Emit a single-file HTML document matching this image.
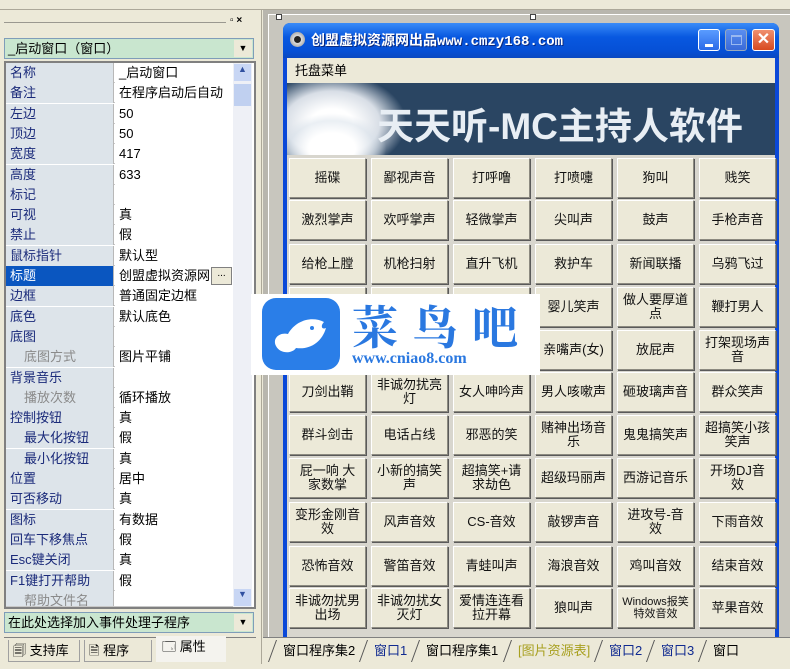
<!DOCTYPE html>
<html><head><meta charset="utf-8"><style>
*{margin:0;padding:0;box-sizing:border-box}
body{width:790px;height:669px;overflow:hidden;background:#ece9d8;position:relative;font-family:"Liberation Sans","Noto Sans CJK SC","WenQuanYi Zen Hei",sans-serif;font-size:13px;color:#000}
.a{position:absolute}
.row{position:absolute;left:6px;width:227px;height:20px;border-bottom:1px solid #c8c8c8}
.row .n{position:absolute;left:0;top:0;width:108px;height:20px;background:#dde4ea;color:#1a2a7a;padding-left:4px;line-height:20px;border-right:1px solid #b8b8b8}
.row .v{position:absolute;left:109px;top:0;width:118px;height:20px;background:#fff;padding-left:4px;line-height:20px;white-space:nowrap;overflow:hidden}
.sub .n{padding-left:18px}
.gray .n{color:#8a8a8a}
.sel .n{background:#0a56c0;color:#fff}
.b{position:absolute;width:77px;height:40px;background:#ece9d8;border:1px solid;border-color:#fff #8c8a80 #8c8a80 #fff;box-shadow:1px 1px 0 #5a5a5a;display:flex;align-items:center;justify-content:center;text-align:center;font-size:13px;line-height:14px;color:#111;padding:0 4px}
.tab{position:absolute;top:640px;height:22px;line-height:22px;font-size:13px}
.bt span{display:inline-block;padding:0 8px 0 10px;border-left:1px solid #555;transform:skewX(-20deg)}
.bt span i{display:inline-block;font-style:normal;transform:skewX(20deg)}
</style></head><body>
<div class="a" style="left:0;top:0;width:790px;height:10px;background:#ece9d8;border-bottom:1px solid #aca899"></div>
<div class="a" style="left:0;top:10px;width:262px;height:659px;background:#ece9d8;border-right:1px solid #aca899"></div>
<div class="a" style="left:4px;top:22px;width:222px;height:1px;background:#9a9890"></div>
<div class="a" style="left:230px;top:15px;font-size:10px;font-weight:bold">▫ ×</div>
<div class="a" style="left:4px;top:38px;width:250px;height:21px;background:#c9e6cf;border:1px solid #7f9db9;line-height:19px;padding-left:3px">_启动窗口（窗口）</div>
<div class="a" style="left:234px;top:40px;width:18px;height:17px;background:#ece9d8;font-size:9px;text-align:center;line-height:17px">▼</div>
<div class="a" style="left:4px;top:61px;width:252px;height:548px;border:2px solid #808080;background:#fff"></div>
<div class="a" style="left:233px;top:63px;width:19px;height:544px;background:#eef0f6"></div>
<div class="a" style="left:234px;top:64px;width:17px;height:17px;background:#c8d6f4;font-size:9px;text-align:center;color:#3050a0">▲</div>
<div class="a" style="left:234px;top:84px;width:17px;height:22px;background:#c0d0f0"></div>
<div class="a" style="left:234px;top:589px;width:17px;height:17px;background:#c8d6f4;font-size:9px;text-align:center;color:#3050a0">▼</div>

<div class="row" style="top:63px"><div class="n">名称</div><div class="v">_启动窗口</div></div>
<div class="row" style="top:83.3px"><div class="n">备注</div><div class="v">在程序启动后自动</div></div>
<div class="row" style="top:103.6px"><div class="n">左边</div><div class="v">50</div></div>
<div class="row" style="top:123.9px"><div class="n">顶边</div><div class="v">50</div></div>
<div class="row" style="top:144.2px"><div class="n">宽度</div><div class="v">417</div></div>
<div class="row" style="top:164.5px"><div class="n">高度</div><div class="v">633</div></div>
<div class="row" style="top:184.8px"><div class="n">标记</div><div class="v"></div></div>
<div class="row" style="top:205.1px"><div class="n">可视</div><div class="v">真</div></div>
<div class="row" style="top:225.4px"><div class="n">禁止</div><div class="v">假</div></div>
<div class="row" style="top:245.7px"><div class="n">鼠标指针</div><div class="v">默认型</div></div>
<div class="row sel" style="top:266px"><div class="n">标题</div><div class="v">创盟虚拟资源网</div></div>
<div class="a" style="left:211px;top:267px;width:21px;height:18px;background:#ece9d8;border:1px solid #808080;font-size:10px;text-align:center;line-height:12px">...</div>
<div class="row" style="top:286.3px"><div class="n">边框</div><div class="v">普通固定边框</div></div>
<div class="row" style="top:306.6px"><div class="n">底色</div><div class="v">默认底色</div></div>
<div class="row" style="top:326.9px"><div class="n">底图</div><div class="v"></div></div>
<div class="row sub gray" style="top:347.2px"><div class="n">底图方式</div><div class="v">图片平铺</div></div>
<div class="row" style="top:367.5px"><div class="n">背景音乐</div><div class="v"></div></div>
<div class="row sub gray" style="top:387.8px"><div class="n">播放次数</div><div class="v">循环播放</div></div>
<div class="row" style="top:408.1px"><div class="n">控制按钮</div><div class="v">真</div></div>
<div class="row sub" style="top:428.4px"><div class="n">最大化按钮</div><div class="v">假</div></div>
<div class="row sub" style="top:448.7px"><div class="n">最小化按钮</div><div class="v">真</div></div>
<div class="row" style="top:469px"><div class="n">位置</div><div class="v">居中</div></div>
<div class="row" style="top:489.3px"><div class="n">可否移动</div><div class="v">真</div></div>
<div class="row" style="top:509.6px"><div class="n">图标</div><div class="v">有数据</div></div>
<div class="row" style="top:529.9px"><div class="n">回车下移焦点</div><div class="v">假</div></div>
<div class="row" style="top:550.2px"><div class="n">Esc键关闭</div><div class="v">真</div></div>
<div class="row" style="top:570.5px"><div class="n">F1键打开帮助</div><div class="v">假</div></div>
<div class="row sub gray" style="top:590.8px;height:16px;overflow:hidden"><div class="n">帮助文件名</div><div class="v"></div></div>

<div class="a" style="left:4px;top:612px;width:250px;height:21px;background:#c9e6cf;border:1px solid #7f9db9;line-height:19px;padding-left:3px">在此处选择加入事件处理子程序</div>
<div class="a" style="left:234px;top:614px;width:18px;height:17px;background:#ece9d8;font-size:9px;text-align:center;line-height:17px">▼</div>
<div class="a" style="left:4px;top:637px;width:252px;height:1px;background:#808080"></div>
<div class="tab" style="left:8px;width:72px;border:1px solid #a0a0a0;border-top:none;padding-left:4px">🗐 支持库</div>
<div class="tab" style="left:84px;width:68px;border:1px solid #a0a0a0;border-top:none;padding-left:4px">🗎 程序</div>
<div class="tab" style="left:156px;width:70px;background:#f4f3ee;padding-left:6px;top:636px;height:26px">🗔 属性</div>

<div class="a" style="left:263px;top:10px;width:527px;height:627px;background:#b8b6ae"></div>
<div class="a" style="left:268px;top:14px;width:522px;height:623px;background:#c8c6be;border-top:1px solid #fff;border-left:1px solid #fff"></div>
<div class="a" style="left:276px;top:14px;width:6px;height:6px;border:1px solid #444;background:#fff"></div>
<div class="a" style="left:530px;top:14px;width:6px;height:6px;border:1px solid #444;background:#fff"></div>
<div class="a" style="left:283px;top:23px;width:496px;height:614px;background:#0a48d8;border-radius:7px 7px 0 0"></div>
<div class="a" style="left:283px;top:23px;width:496px;height:35px;background:linear-gradient(#3a8cf8,#0858e0 40%,#0650d6 80%,#0a48c0);border-radius:7px 7px 0 0"></div>
<div class="a" style="left:290px;top:32px;width:15px;height:15px;border-radius:50%;background:radial-gradient(#222 30%,#ddd 35%,#888)"></div>
<div class="a" style="left:311px;top:30px;color:#fff;font-weight:bold;font-size:14px;font-family:'Liberation Mono','Noto Sans CJK SC',monospace;text-shadow:1px 1px #0a2a80">创盟虚拟资源网出品www.cmzy168.com</div>
<div class="a" style="left:698px;top:29px;width:22px;height:22px;border:1px solid #fff;border-radius:3px;background:linear-gradient(#5a9cff,#2a6ae8)"><div class="a" style="left:6px;top:14px;width:8px;height:3px;background:#fff"></div></div>
<div class="a" style="left:725px;top:29px;width:22px;height:22px;border:1px solid #9ab;border-radius:3px;background:linear-gradient(#5a8ef0,#3a6ad8)"><div class="a" style="left:5px;top:5px;width:11px;height:10px;border:1px solid #9ab8f0;border-top-width:2px"></div></div>
<div class="a" style="left:752px;top:29px;width:23px;height:22px;border:1px solid #fff;border-radius:3px;background:linear-gradient(#f09070,#d84a20);color:#fff;font-weight:bold;text-align:center;line-height:20px;font-size:16px">✕</div>
<div class="a" style="left:287px;top:58px;width:488px;height:25px;background:#ece9d8;line-height:25px;padding-left:8px;font-size:13px">托盘菜单</div>
<div class="a" style="left:287px;top:83px;width:488px;height:72px;background:#2a4562;overflow:hidden">
 <div class="a" style="left:-30px;top:-10px;width:150px;height:100px;border-radius:50%;background:radial-gradient(#fff 20%,#d8dee6 45%,rgba(42,69,98,0) 70%)"></div>
 <div class="a" style="left:-10px;top:30px;width:110px;height:70px;border-radius:50%;background:radial-gradient(#fff 30%,rgba(220,228,236,0.6) 55%,rgba(42,69,98,0) 70%)"></div>
 <div class="a" style="left:90px;top:13px;color:#e8eef4;font-weight:bold;font-size:37px;white-space:nowrap">天天听-MC主持人软件</div>
</div>
<div class="a" style="left:287px;top:155px;width:488px;height:482px;background:#d8d6ce"></div>

<div class="b" style="left:289px;top:158px">摇碟</div>
<div class="b" style="left:371px;top:158px">鄙视声音</div>
<div class="b" style="left:453px;top:158px">打呼噜</div>
<div class="b" style="left:535px;top:158px">打喷嚏</div>
<div class="b" style="left:617px;top:158px">狗叫</div>
<div class="b" style="left:699px;top:158px">贱笑</div>

<div class="b" style="left:289px;top:200px">激烈掌声</div>
<div class="b" style="left:371px;top:200px">欢呼掌声</div>
<div class="b" style="left:453px;top:200px">轻微掌声</div>
<div class="b" style="left:535px;top:200px">尖叫声</div>
<div class="b" style="left:617px;top:200px">鼓声</div>
<div class="b" style="left:699px;top:200px">手枪声音</div>

<div class="b" style="left:289px;top:244px">给枪上膛</div>
<div class="b" style="left:371px;top:244px">机枪扫射</div>
<div class="b" style="left:453px;top:244px">直升飞机</div>
<div class="b" style="left:535px;top:244px">救护车</div>
<div class="b" style="left:617px;top:244px">新闻联播</div>
<div class="b" style="left:699px;top:244px">乌鸦飞过</div>

<div class="b" style="left:289px;top:287px">笑声</div>
<div class="b" style="left:371px;top:287px">笑声</div>
<div class="b" style="left:453px;top:287px">笑声</div>
<div class="b" style="left:535px;top:287px">婴儿笑声</div>
<div class="b" style="left:617px;top:287px">做人要厚道点</div>
<div class="b" style="left:699px;top:287px">鞭打男人</div>

<div class="b" style="left:289px;top:330px">声音</div>
<div class="b" style="left:371px;top:330px">声音</div>
<div class="b" style="left:453px;top:330px">声音</div>
<div class="b" style="left:535px;top:330px">亲嘴声(女)</div>
<div class="b" style="left:617px;top:330px">放屁声</div>
<div class="b" style="left:699px;top:330px">打架现场声音</div>

<div class="b" style="left:289px;top:372px">刀剑出鞘</div>
<div class="b" style="left:371px;top:372px">非诚勿扰亮灯</div>
<div class="b" style="left:453px;top:372px">女人呻吟声</div>
<div class="b" style="left:535px;top:372px">男人咳嗽声</div>
<div class="b" style="left:617px;top:372px">砸玻璃声音</div>
<div class="b" style="left:699px;top:372px">群众笑声</div>

<div class="b" style="left:289px;top:415px">群斗剑击</div>
<div class="b" style="left:371px;top:415px">电话占线</div>
<div class="b" style="left:453px;top:415px">邪恶的笑</div>
<div class="b" style="left:535px;top:415px">赌神出场音乐</div>
<div class="b" style="left:617px;top:415px">鬼鬼搞笑声</div>
<div class="b" style="left:699px;top:415px">超搞笑小孩笑声</div>

<div class="b" style="left:289px;top:458px">屁一响 大家数掌</div>
<div class="b" style="left:371px;top:458px">小新的搞笑声</div>
<div class="b" style="left:453px;top:458px">超搞笑+请求劫色</div>
<div class="b" style="left:535px;top:458px">超级玛丽声</div>
<div class="b" style="left:617px;top:458px">西游记音乐</div>
<div class="b" style="left:699px;top:458px">开场DJ音效</div>

<div class="b" style="left:289px;top:502px">变形金刚音效</div>
<div class="b" style="left:371px;top:502px">风声音效</div>
<div class="b" style="left:453px;top:502px">CS-音效</div>
<div class="b" style="left:535px;top:502px">敲锣声音</div>
<div class="b" style="left:617px;top:502px">进攻号-音效</div>
<div class="b" style="left:699px;top:502px">下雨音效</div>

<div class="b" style="left:289px;top:546px">恐怖音效</div>
<div class="b" style="left:371px;top:546px">警笛音效</div>
<div class="b" style="left:453px;top:546px">青蛙叫声</div>
<div class="b" style="left:535px;top:546px">海浪音效</div>
<div class="b" style="left:617px;top:546px">鸡叫音效</div>
<div class="b" style="left:699px;top:546px">结束音效</div>

<div class="b" style="left:289px;top:588px">非诚勿扰男出场</div>
<div class="b" style="left:371px;top:588px">非诚勿扰女灭灯</div>
<div class="b" style="left:453px;top:588px">爱情连连看拉开幕</div>
<div class="b" style="left:535px;top:588px">狼叫声</div>
<div class="b" style="left:617px;top:588px;font-size:11px;line-height:12px">Windows报笑 特效音效</div>
<div class="b" style="left:699px;top:588px">苹果音效</div>

<div class="a" style="left:251px;top:294px;width:289px;height:81px;background:#fff"></div>
<div class="a" style="left:262px;top:298px;width:78px;height:72px;background:#2a7ee8;border-radius:14px">
<svg width="78" height="72" viewBox="0 0 78 72"><path d="M14 48 C10 40 18 34 26 36 C34 22 50 18 62 24 C58 28 60 32 64 30 C60 44 48 52 34 50 C30 56 18 56 14 48 Z" fill="#fff"/><circle cx="50" cy="30" r="2" fill="#2a7ee8"/></svg></div>
<div class="a" style="left:352px;top:292px;color:#2a78e0;font-size:46px;font-weight:bold;font-family:'Noto Serif CJK SC','WenQuanYi Zen Hei',serif;letter-spacing:14px;white-space:nowrap">菜鸟吧</div>
<div class="a" style="left:352px;top:350px;color:#2a78e0;font-size:16px;font-weight:bold;font-family:'Liberation Serif',serif;white-space:nowrap">www.cniao8.com</div>

<div class="a" style="left:263px;top:637px;width:527px;height:32px;background:#ece9d8;border-top:1px solid #808080"></div>
<div class="a bt" style="left:272px;top:640px;height:22px;line-height:22px;font-size:13px;white-space:nowrap">
<span><i>窗口程序集2</i></span><span style="color:#102a90"><i>窗口1</i></span><span><i>窗口程序集1</i></span><span style="color:#a8a020"><i>[图片资源表]</i></span><span style="color:#102a90"><i>窗口2</i></span><span style="color:#102a90"><i>窗口3</i></span><span><i>窗口</i></span></div>
<div class="a" style="left:0;top:664px;width:790px;height:5px;background:#ece9d8"></div>
</body></html>
